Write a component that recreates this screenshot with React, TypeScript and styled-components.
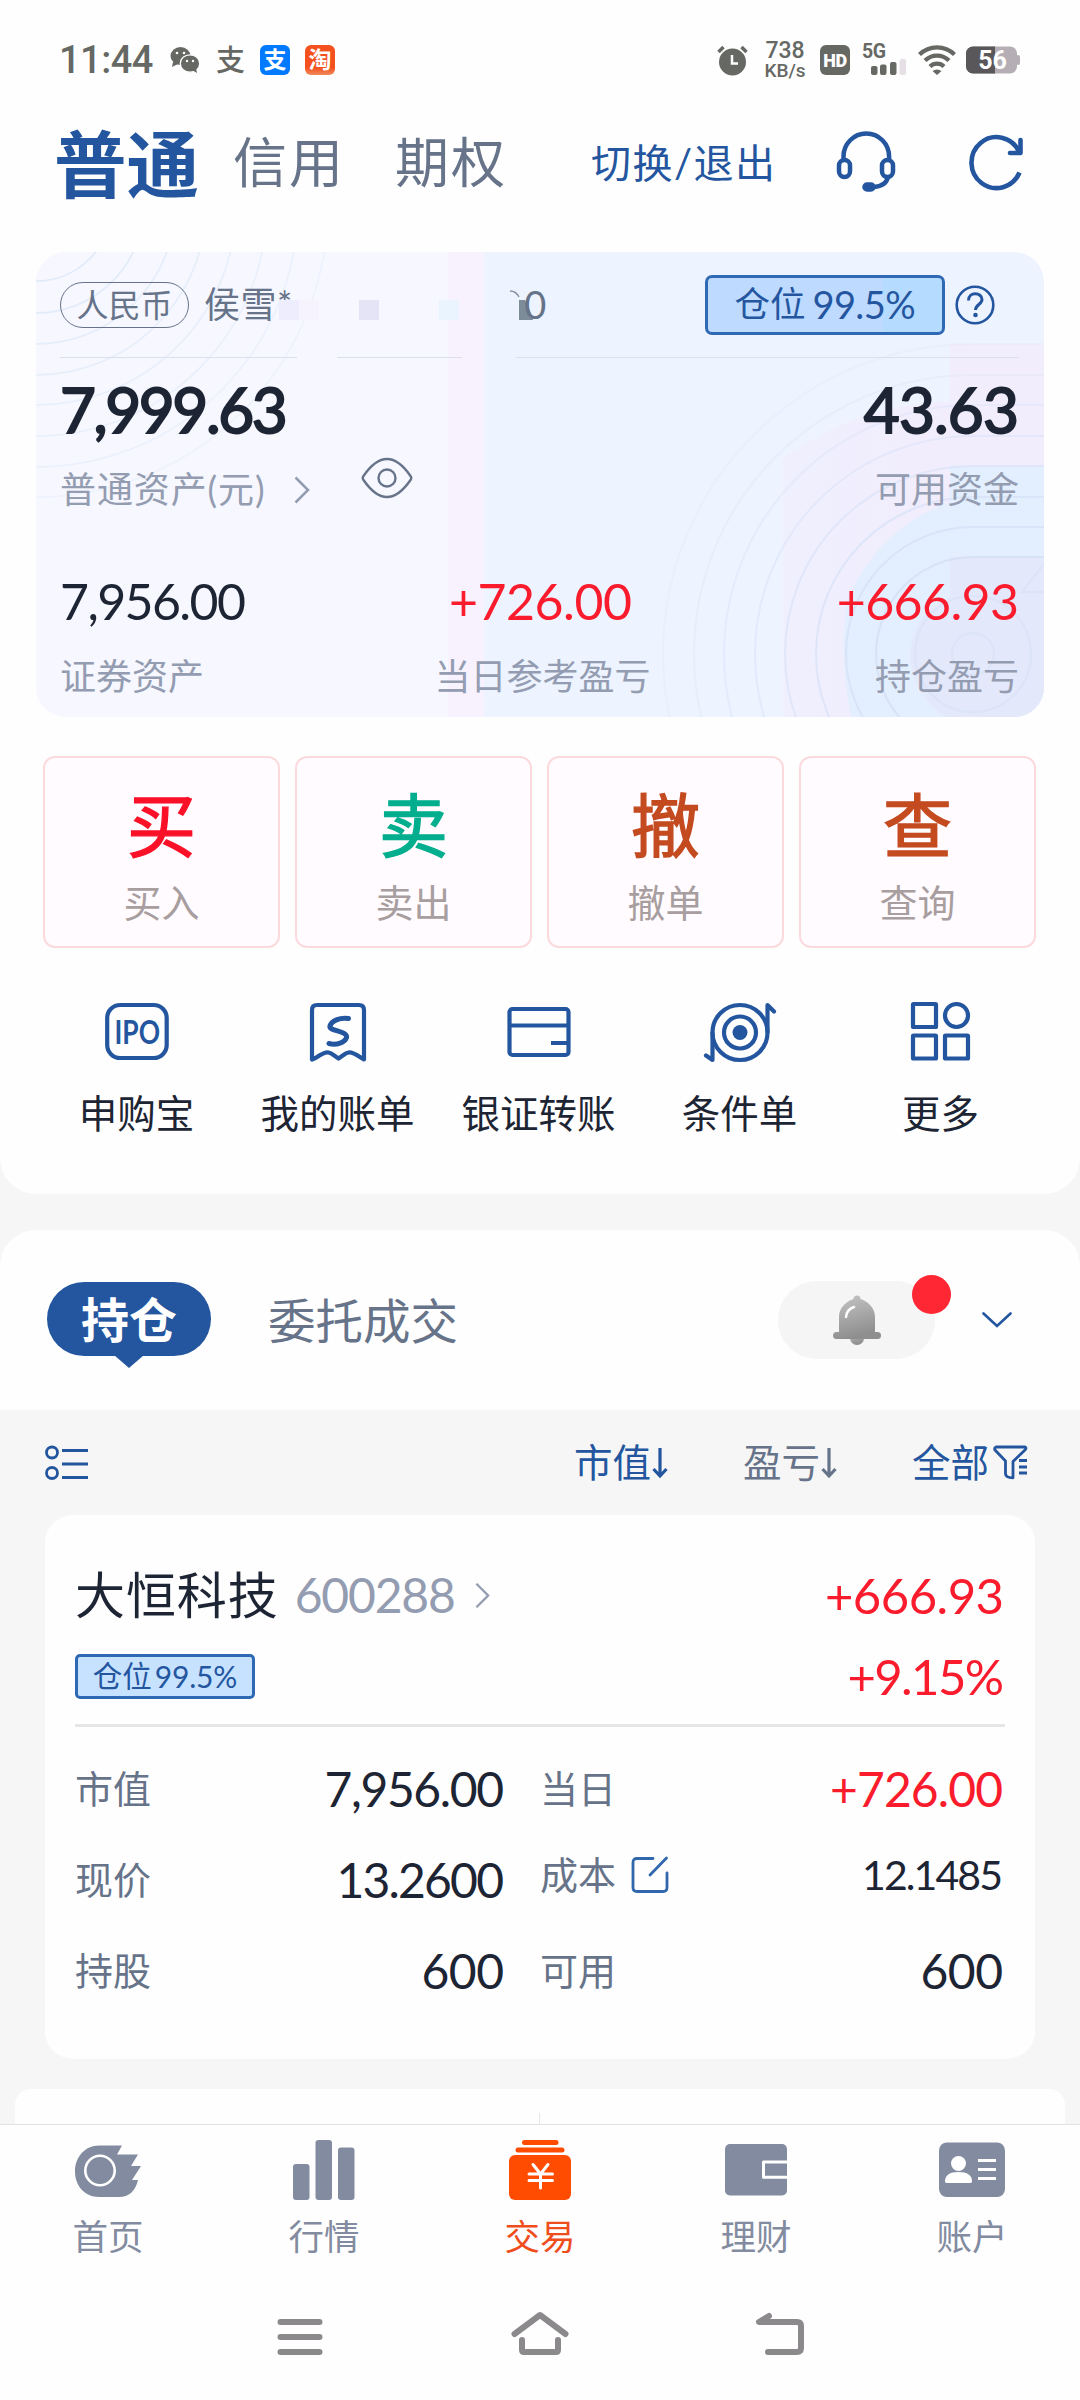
import React from 'react';
import styled, { createGlobalStyle } from 'styled-components';

const BLUE = '#24569f';
const INK = '#1d2433';
const SLATE = '#667389';
const MUTED = '#939cb0';
const RED = '#fa1b2d';
const NAV = '#828b9f';

const Global = createGlobalStyle`
  * { box-sizing: border-box; }
  html, body { margin: 0; padding: 0; background: #fefefe; }
  body { font-family: 'Lato', 'Noto Sans CJK SC', sans-serif; color: ${INK}; }
  svg { display: block; flex: none; }
`;

const Screen = styled.div`
  width: 1080px;
  height: 2400px;
  overflow: hidden;
  display: flex;
  flex-direction: column;
  background: #f6f6f6;
`;

type TextProps = {
  $size: number;
  $color?: string;
  $weight?: number;
  $spacing?: number;
  $stroke?: number;
};

const Text = styled.span<TextProps>`
  font-size: ${(p) => p.$size}px;
  line-height: 1.2;
  color: ${(p) => p.$color ?? INK};
  font-weight: ${(p) => p.$weight ?? 400};
  letter-spacing: ${(p) => p.$spacing ?? 0}px;
  margin-right: ${(p) => -(p.$spacing ?? 0)}px;
  -webkit-text-stroke: ${(p) => p.$stroke ?? 0}px currentColor;
  white-space: nowrap;
`;

/* ---------- top area ---------- */

const TopPanel = styled.section`
  height: 1194px;
  flex: none;
  background: #fefefe;
  border-radius: 0 0 36px 36px;
  display: flex;
  flex-direction: column;
`;

const StatusBar = styled.header`
  height: 120px;
  padding: 0 60px 0 59px;
  display: flex;
  align-items: center;
  justify-content: space-between;
`;

const StatusGroup = styled.div`
  display: flex;
  align-items: center;
`;

const Clock = styled.span`
  font-family: 'Roboto', sans-serif;
  font-weight: 500;
  font-size: 38px;
  letter-spacing: -0.5px;
  line-height: 40px;
  width: 95px;
  color: #666864;
`;

const PayGlyph = styled.span`
  font-size: 29px;
  line-height: 30px;
  width: 30px;
  margin: 0 14px 0 16px;
  color: #666864;
  font-weight: 500;
`;

const AppTile = styled.span<{ $bg: string }>`
  width: 30px;
  height: 30px;
  border-radius: 6px;
  background: ${(p) => p.$bg};
  color: #fff;
  font-size: 23px;
  font-weight: 700;
  line-height: 29px;
  text-align: center;
  margin-right: 15px;
`;

const Speed = styled.div`
  font-family: 'Roboto', sans-serif;
  font-weight: 500;
  color: #666864;
  width: 46px;
  margin: 0 12px 0 14px;
  display: flex;
  flex-direction: column;
  align-items: center;
  b { font-weight: 500; font-size: 23px; line-height: 20px; }
  i { font-style: normal; font-size: 19px; line-height: 19px; }
`;

const HdTile = styled.span`
  width: 30px;
  height: 30px;
  border-radius: 6px;
  background: #666864;
  color: #fefefe;
  font: 900 18px/31px 'Roboto', sans-serif;
  letter-spacing: -0.5px;
  text-align: center;
  margin-right: 12px;
`;

const TitleBar = styled.div`
  height: 84px;
  display: flex;
  align-items: center;
  padding: 2px 56px 0 54px;
`;

const TitleTabs = styled.nav`
  display: flex;
  align-items: center;
  flex: 1;
`;

const TitleTab = styled(Text)<{ $left?: number }>`
  margin-left: ${(p) => p.$left ?? 0}px;
`;

const TitleActions = styled.div`
  display: flex;
  align-items: center;
`;

/* ---------- asset card ---------- */

const AssetCard = styled.section`
  position: relative;
  margin: 48px 36px 0;
  height: 465px;
  border-radius: 30px;
  overflow: hidden;
  background: linear-gradient(90deg, #f6f7ff 0 412px, #f8f1fe 412px 448px, #edf3ff 448px);
`;

const CardArt = styled.svg`
  position: absolute;
  left: 0;
  top: 0;
`;

const CardBody = styled.div`
  position: relative;
  padding: 0 25px 0 24px;
`;

const AccountRow = styled.div`
  height: 105px;
  display: flex;
  align-items: center;
  justify-content: space-between;
  margin-right: 24px;
`;

const Inline = styled.div<{ $gap?: number; $margin?: string }>`
  display: flex;
  align-items: center;
  gap: ${(p) => p.$gap ?? 0}px;
  margin: ${(p) => p.$margin ?? '0'};
`;

const CurrencyPill = styled.span`
  width: 129px;
  height: 46px;
  border: 1.5px solid ${SLATE};
  border-radius: 23px;
  color: ${SLATE};
  font-size: 32px;
  line-height: 43px;
  text-align: center;
  margin-right: 15px;
`;

const MaskArt = styled.svg`
  margin-left: -13px;
`;

const MaskTail = styled(Text)`
  margin-left: -12px;
`;

const Badge = styled.span<{ $small?: boolean }>`
  display: flex;
  align-items: center;
  justify-content: center;
  gap: ${(p) => (p.$small ? 3 : 7)}px;
  width: ${(p) => (p.$small ? 180 : 240)}px;
  height: ${(p) => (p.$small ? 45 : 60)}px;
  border: 3px solid #3069b3;
  border-radius: ${(p) => (p.$small ? 5 : 7)}px;
  background: ${(p) => (p.$small ? '#c6e2ff' : 'linear-gradient(90deg, #bedaff 0 75%, #b5dbff 75%)')};
`;

const Rules = styled.div`
  display: flex;
  height: 1px;
`;

const Rule = styled.span<{ $w: number; $gap?: number }>`
  width: ${(p) => p.$w}px;
  margin-left: ${(p) => p.$gap ?? 0}px;
  height: 1px;
  background: #dbe0ee;
`;

const Row = styled.div<{ $h: number; $top?: number }>`
  display: flex;
  align-items: center;
  justify-content: space-between;
  height: ${(p) => p.$h}px;
  margin-top: ${(p) => p.$top ?? 0}px;
`;

const Thirds = styled.div<{ $h: number; $top?: number; $shift?: number }>`
  display: grid;
  grid-template-columns: 1fr auto 1fr;
  align-items: center;
  height: ${(p) => p.$h}px;
  margin-top: ${(p) => p.$top ?? 0}px;
  > :nth-child(2) { padding-left: ${(p) => p.$shift ?? 0}px; }
  > :last-child { justify-self: end; }
`;

/* ---------- trade buttons & shortcuts ---------- */

const TradeGrid = styled.div`
  display: grid;
  grid-template-columns: repeat(4, 1fr);
  column-gap: 15px;
  margin: 39px 44px 0 43px;
`;

const TradeButton = styled.button`
  height: 192px;
  margin: 0;
  border: 2px solid #fadadd;
  border-radius: 12px;
  background: #fffbfe;
  padding: 28px 0 0;
  display: flex;
  flex-direction: column;
  align-items: center;
  font-family: inherit;
`;

const TradeGlyph = styled.span<{ $color: string }>`
  font-size: 69px;
  line-height: 80px;
  font-weight: 400;
  -webkit-text-stroke: 1.4px currentColor;
  stroke-linejoin: round;
  color: ${(p) => p.$color};
`;

const TradeLabel = styled.span`
  margin-top: 11px;
  font-size: 38px;
  line-height: 50px;
  color: #a89e9f;
`;

const Shortcuts = styled.div`
  display: grid;
  grid-template-columns: repeat(5, 1fr);
  padding: 0 39px 0 36px;
  margin-top: 52px;
`;

const Shortcut = styled.div`
  display: flex;
  flex-direction: column;
  align-items: center;
`;

const ShortcutLabel = styled.span`
  margin-top: 24px;
  font-size: 38.5px;
  line-height: 50px;
  white-space: nowrap;
`;

/* ---------- positions ---------- */

const TabsPanel = styled.section`
  height: 180px;
  flex: none;
  margin-top: 36px;
  padding: 0 68px 0 47px;
  background: #fefefe;
  border-radius: 36px 36px 0 0;
  display: flex;
  align-items: center;
  justify-content: space-between;
`;

const ActiveTab = styled.div`
  position: relative;
  width: 164px;
  height: 74px;
  border-radius: 37px;
  background: ${BLUE};
  color: #fff;
  font-size: 48px;
  line-height: 76px;
  font-weight: 700;
  text-align: center;
  margin: 0 57px 2px 0;
  &::after {
    content: '';
    position: absolute;
    left: 67px;
    top: 73px;
    border: 15px solid transparent;
    border-top: 13px solid ${BLUE};
    border-bottom: 0;
  }
`;

const BellButton = styled.div`
  position: relative;
  width: 157px;
  height: 78px;
  border-radius: 39px;
  background: #f5f5f6;
  display: flex;
  justify-content: center;
  align-items: center;
  margin-right: 47px;
`;

const RedDot = styled.span`
  position: absolute;
  width: 39px;
  height: 39px;
  border-radius: 50%;
  background: #ff2733;
  right: -16px;
  top: -6px;
`;

const FilterBar = styled.div`
  height: 105px;
  flex: none;
  padding: 0 52px 0 44px;
  display: flex;
  align-items: center;
  justify-content: space-between;
`;

const HoldingCard = styled.section`
  margin: 0 45px;
  height: 544px;
  flex: none;
  border-radius: 28px;
  background: #fefefe;
  padding: 30px 31px 0 30px;
`;

const HoldingRule = styled.div`
  height: 3px;
  margin: 17px -1px 16px 0;
  background: #e6e6e6;
`;

const Figures = styled.div`
  display: grid;
  grid-template-columns: 429px 463px;
  column-gap: 36px;
  margin-right: -1px;
`;

const Figure = styled.div<{ $up?: number }>`
  height: 91px;
  display: flex;
  align-items: center;
  justify-content: space-between;
  padding-bottom: ${(p) => p.$up ?? 0}px;
`;

const NextCard = styled.section`
  height: 35px;
  flex: none;
  margin: 30px 15px 0;
  border-radius: 16px 16px 0 0;
  background: #fefefe;
  padding-top: 24px;
  display: flex;
  justify-content: center;
`;

const NextRule = styled.span`
  width: 1px;
  background: #e6e6e6;
  margin-right: 1px;
`;

/* ---------- bottom bars ---------- */

const TabBar = styled.nav`
  height: 156px;
  flex: none;
  border-top: 1px solid #e2e2e2;
  background: #fefefe;
  display: grid;
  grid-template-columns: repeat(5, 1fr);
`;

const TabItem = styled.div<{ $active?: boolean }>`
  display: flex;
  flex-direction: column;
  align-items: center;
  padding-top: 15px;
  color: ${(p) => (p.$active ? '#f04d1c' : NAV)};
  font-size: 35.5px;
  line-height: 44px;
  svg { margin-bottom: 15px; }
`;

const SystemBar = styled.footer`
  flex: 1;
  background: #fefefe;
  display: flex;
  justify-content: center;
  gap: 180px;
  padding-top: 25px;
`;

/* ---------- icons ---------- */

const WeChat = () => (
  <svg width="30" height="28" viewBox="0 0 30 28">
    <ellipse cx="10.500" cy="10" rx="10" ry="9" fill="#666864" />
    <path d="M3 16l-1 5 6-3z" fill="#666864" />
    <ellipse cx="20" cy="17.500" rx="9.700" ry="8.700" fill="#666864" stroke="#fefefe" strokeWidth="1.300" />
    <path d="M22 24l5 3-1-5z" fill="#666864" />
    <g fill="#fefefe">
      <circle cx="7" cy="7" r="1.300" /><circle cx="14" cy="7" r="1.300" />
      <circle cx="17" cy="15" r="1.200" /><circle cx="23" cy="15" r="1.200" />
    </g>
  </svg>
);

const Alarm = () => (
  <svg width="31" height="31" viewBox="0 0 31 31" fill="none">
    <circle cx="15.500" cy="17" r="13.500" fill="#666864" />
    <path d="M1.500 7l5-5M29.500 7l-5-5" stroke="#666864" strokeWidth="3.500" />
    <path d="M15 10v8.500h6" stroke="#fefefe" strokeWidth="2.500" />
  </svg>
);

const SignalBox = styled.div`
  position: relative;
  width: 46px;
  height: 32px;
`;

const FiveG = styled.span`
  position: absolute;
  left: 0;
  top: -4px;
  font: 700 19.5px/24px 'Roboto', sans-serif;
  letter-spacing: -0.5px;
  color: #666864;
`;

const Signal = () => (
  <SignalBox>
    <svg width="46" height="32" viewBox="0 0 46 32">
      <rect x="9" y="22" width="6.500" height="9" rx="2" fill="#666864" />
      <rect x="18" y="20.500" width="6.500" height="10.500" rx="2" fill="#666864" />
      <rect x="28" y="18" width="6.500" height="13" rx="2" fill="#666864" />
      <rect x="37.500" y="15" width="6.500" height="16" rx="2" fill="#e6e0e6" />
    </svg>
    <FiveG>5G</FiveG>
  </SignalBox>
);

const Wifi = () => (
  <svg width="38" height="31" viewBox="0 0 38 31" fill="none" stroke="#666864" strokeWidth="4.200">
    <path d="M1.500 9.500a25 25 0 0 1 35 0" />
    <path d="M7 15.500a17 17 0 0 1 24 0" />
    <path d="M12 21.500a10 10 0 0 1 14 0" />
    <path d="M14.500 26q4.500-3 9 0L19 30z" fill="#666864" stroke="none" />
  </svg>
);

const Battery = () => (
  <svg width="54" height="28" viewBox="0 0 54 28">
    <rect x="0" y="0.500" width="51" height="27" rx="7" fill="#b5afb5" />
    <path d="M7 .5h22v27H7a7 7 0 0 1-7-7v-13a7 7 0 0 1 7-7z" fill="#595759" />
    <rect x="50" y="9" width="4" height="10" rx="2" fill="#b5afb5" />
    <text x="26.500" y="23" textAnchor="middle" fontFamily="Roboto, sans-serif" fontWeight="700" fontSize="25" fill="#fff">56</text>
  </svg>
);

const Headset = () => (
  <svg width="60" height="62" viewBox="0 0 60 62" fill="none" stroke={BLUE} strokeWidth="4.500">
    <path d="M7.500 28v-2.500a22.800 23 0 0 1 45.600 0V28" />
    <rect x="3" y="29" width="11" height="17" rx="5.500" />
    <rect x="46" y="29" width="11" height="17" rx="5.500" />
    <path d="M52 46q-2 9-14 10" />
    <rect x="28.500" y="53.500" width="9" height="5" rx="2.500" fill={BLUE} />
  </svg>
);

const Refresh = () => (
  <svg width="55" height="58" viewBox="0 0 55 58" fill="none" stroke={BLUE} strokeWidth="4.600">
    <path d="M50.500 39.500A25 25.500 0 1 1 50 18.500" />
    <path d="M51.500 7v13H41" strokeLinecap="round" strokeLinejoin="round" />
  </svg>
);

const CardLines = () => (
  <CardArt width="1008" height="465" viewBox="0 0 1008 465" fill="none">
    <defs>
      <linearGradient id="blush" x1="0" y1="0" x2="1" y2="0">
        <stop offset="0" stopColor="#f0eefe" stopOpacity=".75" />
        <stop offset=".5" stopColor="#f1edfd" />
      </linearGradient>
    </defs>
    <path d="M1008 92H914V150Q830 150 747 205V465H1008z" fill="url(#blush)" />
    <path d="M1008 214H914V250Q845 275 812 345Q802 400 815 465H1008z" fill="#e3effe" />
    <path d="M1008 305H914V345Q876 362 874 405Q878 445 910 465H1008z" fill="#e4e8fb" />
    <g stroke="#dfeaf8" strokeWidth="1.600">
      {[76, 108, 139, 170, 200, 231, 262, 292].map((r, i) => (
        <circle key={r} cx="0" cy="-47" r={r} opacity={1 - i * 0.09} />
      ))}
    </g>
    <g stroke="#d3dff5" strokeWidth="2">
      {[97, 127, 157, 188, 218, 249, 279, 310].map((r, i) => (
        <path
          key={r}
          d={`M1008 ${402 - r}H937A${r} ${r} 0 0 0 937 ${402 + r}`}
          opacity={0.8 - i * 0.09}
        />
      ))}
      <circle cx="937" cy="402" r="58" opacity=".5" />
      <circle cx="937" cy="402" r="21" opacity=".5" />
      <path d="M1008 312l-22 28h22" opacity=".6" />
    </g>
  </CardArt>
);

const Help = () => (
  <svg width="40" height="40" viewBox="0 0 40 40" fill="none" stroke={BLUE} strokeWidth="2.600">
    <circle cx="20" cy="20" r="18.300" />
    <path d="M13.500 15.500c0-9 13.500-8.500 13.500-1 0 5-6.500 5-6.500 10.500" strokeWidth="3" />
    <circle cx="20.500" cy="30" r="2.300" fill={BLUE} stroke="none" />
  </svg>
);

const Chevron = ({ color, w = 16, h = 28 }: { color: string; w?: number; h?: number }) => (
  <svg width={w} height={h} viewBox="0 0 16 28" fill="none" stroke={color} strokeWidth="2.500">
    <path d="M1.500 1.500L14 14 1.500 26.500" />
  </svg>
);

const Eye = () => (
  <svg width="52" height="42" viewBox="0 0 52 42" fill="none" stroke={SLATE} strokeWidth="2.400">
    <path d="M2.500 19C8 11 16 2 26 2s18 9 23.500 17q1.500 2 0 4C44 31 36 40 26 40S8 31 2.500 23q-1.500-2 0-4z" />
    <circle cx="26" cy="21" r="8.500" />
  </svg>
);

const IpoIcon = () => (
  <svg width="64" height="64" viewBox="0 0 64 64" fill="none">
    <rect x="2.200" y="5" width="59.500" height="53" rx="13" stroke={BLUE} strokeWidth="4.200" />
    <text x="9.500" y="43.500" textLength="45.500" lengthAdjust="spacingAndGlyphs" fontFamily="Lato, sans-serif" fontWeight="700" fontSize="31.500" fill={BLUE}>IPO</text>
  </svg>
);

const BillIcon = () => (
  <svg width="64" height="64" viewBox="0 0 64 64" fill="none" stroke={BLUE} strokeWidth="4.200">
    <path d="M6 59.500V10q0-5 5-5h42q5 0 5 5v49.500l-2.500-1.500q-9-6-13-5.500-2.500.5-5 2.500l-5 3.500-5-3.500q-2.500-2-5-2.500-4-.5-13 5.500z" strokeLinejoin="round" />
    <path d="M42.500 18.500c-9-1-17 2-18.500 7.500s18 4.500 16.500 11.500c-1.500 5-10 8-17.500 6" strokeWidth="5" strokeLinecap="round" />
  </svg>
);

const TransferIcon = () => (
  <svg width="64" height="64" viewBox="0 0 64 64" fill="none" stroke={BLUE} strokeWidth="4.200">
    <rect x="2.500" y="9" width="59" height="46" rx="3" />
    <path d="M2 25.500h60M44 43h18" />
  </svg>
);

const TargetIcon = () => (
  <svg width="74" height="64" viewBox="0 0 74 64" fill="none" stroke={BLUE} strokeWidth="4.200">
    <circle cx="37" cy="32.500" r="27.500" />
    <circle cx="37" cy="32.500" r="16" />
    <circle cx="37" cy="32.500" r="7.500" fill={BLUE} stroke="none" />
    <path d="M9.500 33v27L3 55.500M64.500 32V5l6.500 6.500" strokeLinecap="round" strokeLinejoin="round" />
  </svg>
);

const MoreIcon = () => (
  <svg width="62" height="64" viewBox="0 0 62 64" fill="none" stroke={BLUE} strokeWidth="4.200">
    <rect x="3" y="4" width="23" height="23" rx="0.500" />
    <circle cx="46.500" cy="15.500" r="11.500" />
    <rect x="3" y="35.500" width="23" height="23" rx="0.500" />
    <rect x="35" y="35.500" width="23" height="23" rx="0.500" />
  </svg>
);

const Bell = () => (
  <svg width="48" height="52" viewBox="0 0 48 52">
    <defs>
      <linearGradient id="bell" x1="0" y1="0" x2="0.300" y2="1">
        <stop offset="0" stopColor="#c6c6c6" />
        <stop offset="1" stopColor="#8e8e8e" />
      </linearGradient>
    </defs>
    <g fill="url(#bell)">
      <circle cx="24" cy="44" r="7" />
      <path d="M20.500 5a3.500 3.500 0 0 1 7 0c9 3 14.500 10 14.500 18v15h2.500a3.500 3.500 0 0 1 0 7h-41a3.500 3.500 0 0 1 0-7H6V23C6 15 11.500 8 20.500 5z" />
    </g>
    <path d="M13 23q1-8 8-10" stroke="#fff" strokeWidth="2.500" strokeLinecap="round" fill="none" />
  </svg>
);

const DownChevron = () => (
  <svg width="30" height="16" viewBox="0 0 30 16" fill="none" stroke={BLUE} strokeWidth="2.600" strokeLinecap="round">
    <path d="M1.500 1.500L15 14 28.500 1.500" />
  </svg>
);

const ListIcon = () => (
  <svg width="45" height="36" viewBox="0 0 45 36" fill="none" stroke={BLUE} strokeWidth="2.800">
    <circle cx="8" cy="7.500" r="5.500" />
    <circle cx="8" cy="28" r="5.500" />
    <path d="M18 5.500h26M18 19h26M18 32.500h26" />
  </svg>
);

const SortArrow = ({ color }: { color: string }) => (
  <svg width="16" height="32" viewBox="0 0 16 32" fill="none" stroke={color} strokeWidth="3.200">
    <path d="M8 1v28M1.500 22l6.500 7 6.500-7" />
  </svg>
);

const Funnel = () => (
  <svg width="35" height="35" viewBox="0 0 35 35" fill="none" stroke={BLUE} strokeWidth="2.800" strokeLinejoin="round">
    <path d="M3 2h29q2 1 0 3L20 16.500v16.300q-8 0-7.500-5V16L2 5q-1-2 1-3z" />
    <path d="M26 15.500h8M26 22h8M26 28h8" />
  </svg>
);

const EditIcon = () => (
  <svg width="38" height="38" viewBox="0 0 38 38" fill="none" stroke="#3167ad" strokeWidth="2.800" strokeLinecap="round">
    <path d="M22 2.500H6q-4 0-4 4v25q0 4 4 4h26q4 0 4-4V17" />
    <path d="M19 19L35.500 2" />
  </svg>
);

const HomeTab = () => (
  <svg width="66" height="60" viewBox="0 0 66 60">
    <path d="M47 5.500l-5 9h21L56 26h10L57 40h6q-4 17-19 17H24C10 57 0 46 0 31.500S10 5.500 24 5.500z" fill={NAV} />
    <circle cx="25" cy="30.500" r="14.700" fill="none" stroke="#fff" strokeWidth="2.600" />
  </svg>
);

const QuoteTab = () => (
  <svg width="62" height="60" viewBox="0 0 62 60" fill={NAV}>
    <rect x="0" y="24" width="16.500" height="36" rx="3" />
    <rect x="22.500" y="0" width="16.500" height="60" rx="3" />
    <rect x="45" y="7.500" width="16.500" height="52.500" rx="3" />
  </svg>
);

const TradeTab = () => (
  <svg width="62" height="60" viewBox="0 0 62 60" fill="#ff4c00">
    <rect x="13" y="0" width="36.500" height="5" rx="2.500" />
    <rect x="6.500" y="7.500" width="49" height="5" rx="2.500" />
    <rect x="0" y="15" width="62" height="45" rx="6" />
    <path d="M24 24.500l7.500 9.500 7.500-9.500M31.500 34v14M20 34h23.500M20 40.500h23.500" fill="none" stroke="#fff" strokeWidth="3" strokeLinecap="round" />
  </svg>
);

const WalletTab = () => (
  <svg width="62" height="60" viewBox="0 0 62 60">
    <rect x="0" y="4" width="62" height="51.500" rx="5" fill={NAV} />
    <path d="M62 22H38.500V37.200H62" fill="none" stroke="#fff" strokeWidth="3" strokeLinejoin="round" />
  </svg>
);

const AccountTab = () => (
  <svg width="66" height="60" viewBox="0 0 66 60">
    <rect x="0" y="2.500" width="66" height="54.500" rx="8" fill={NAV} />
    <circle cx="19.500" cy="23.500" r="7.500" fill="#fff" />
    <path d="M6 41.500q0-9.500 13.500-9.500T33 41.500q0 1.500-2 1.500H8Q6 43 6 41.500z" fill="#fff" />
    <path d="M39 20.500h18M39 29.500h18M39 38.500h18" stroke="#fff" strokeWidth="3" />
  </svg>
);

const SysMenu = () => (
  <svg width="60" height="60" viewBox="0 0 60 60" stroke="#8c898c" strokeWidth="6" strokeLinecap="round">
    <path d="M10.500 17h39M10.500 32h39M10.500 47h39" />
  </svg>
);

const SysHome = () => (
  <svg width="60" height="60" viewBox="0 0 60 60" fill="none" stroke="#8c898c" strokeWidth="6" strokeLinecap="round" strokeLinejoin="round">
    <path d="M4.500 29L30 10l25.500 19" />
    <path d="M12 35v10q0 2 2 2h32q2 0 2-2V35" />
  </svg>
);

const SysBack = () => (
  <svg width="60" height="60" viewBox="0 0 60 60" fill="none" stroke="#8c898c" strokeWidth="6" strokeLinecap="round" strokeLinejoin="round">
    <path d="M19 11L9 17h38q4 0 4 4v22q0 4-4 4H18" />
  </svg>
);

/* ---------- data ---------- */

const trades = [
  { glyph: '买', label: '买入', color: '#fa1128' },
  { glyph: '卖', label: '卖出', color: '#02ae8e' },
  { glyph: '撤', label: '撤单', color: '#c44a20' },
  { glyph: '查', label: '查询', color: '#c44a20' },
];

const shortcuts = [
  { label: '申购宝', icon: <IpoIcon /> },
  { label: '我的账单', icon: <BillIcon /> },
  { label: '银证转账', icon: <TransferIcon /> },
  { label: '条件单', icon: <TargetIcon /> },
  { label: '更多', icon: <MoreIcon /> },
];

const tabs = [
  { label: '首页', icon: <HomeTab /> },
  { label: '行情', icon: <QuoteTab /> },
  { label: '交易', icon: <TradeTab />, active: true },
  { label: '理财', icon: <WalletTab /> },
  { label: '账户', icon: <AccountTab /> },
];

export default function App() {
  return (
    <Screen>
      <Global />
      <TopPanel>
        <StatusBar>
          <StatusGroup>
            <Clock>11:44</Clock>
            <Inline $margin="0 0 0 16px"><WeChat /></Inline>
            <PayGlyph>支</PayGlyph>
            <AppTile $bg="#027aff">支</AppTile>
            <AppTile $bg="linear-gradient(#f4511e 0 75%, #f08a5a)">淘</AppTile>
          </StatusGroup>
          <StatusGroup>
            <Alarm />
            <Speed><b>738</b><i>KB/s</i></Speed>
            <HdTile>HD</HdTile>
            <Signal />
            <Inline $margin="0 10px"><Wifi /></Inline>
            <Battery />
          </StatusGroup>
        </StatusBar>

        <TitleBar>
          <TitleTabs>
            <TitleTab $size={72.5} $color={BLUE} $weight={700}>普通</TitleTab>
            <TitleTab $size={54} $color={SLATE} $spacing={2} $left={34}>信用</TitleTab>
            <TitleTab $size={54} $color={SLATE} $spacing={2} $left={52}>期权</TitleTab>
          </TitleTabs>
          <TitleActions>
            <Text $size={40} $color={BLUE} $spacing={1.5}>切换/退出</Text>
            <Inline $margin="-2px 73px 0 61px"><Headset /></Inline>
            <Inline $margin="-2px 0 0"><Refresh /></Inline>
          </TitleActions>
        </TitleBar>

        <AssetCard>
          <CardLines />
          <CardBody>
            <AccountRow>
              <Inline>
                <CurrencyPill>人民币</CurrencyPill>
                <Text $size={36} $color={SLATE} $spacing={0.5}>侯雪*</Text>
                <MaskArt width="257" height="40" viewBox="0 0 257 40">
                  <rect x="0" y="15" width="20" height="20" fill="#ededfd" />
                  <rect x="20" y="15" width="20" height="20" fill="#f7f3fe" />
                  <rect x="80" y="15" width="20" height="20" fill="#e5e4f7" />
                  <rect x="160" y="15" width="20" height="20" fill="#e9f4ff" />
                  <path d="M231 6q6 0 9 6" stroke="#8793a4" strokeWidth="1.500" fill="none" />
                  <path d="M240 15h6q4 6 8 20h-14z" fill="#7d8c99" />
                </MaskArt>
                <MaskTail $size={38} $color={SLATE}>0</MaskTail>
              </Inline>
              <Inline $gap={10}>
                <Badge>
                  <Text $size={35.5} $color={BLUE}>仓位</Text>
                  <Text $size={38} $color={BLUE} $spacing={-0.6}>99.5%</Text>
                </Badge>
                <Help />
              </Inline>
            </AccountRow>
            <Rules>
              <Rule $w={237} />
              <Rule $w={125} $gap={40} />
              <Rule $w={504} $gap={54} />
            </Rules>
            <Row $h={102}>
              <Text $size={62} $stroke={2} $spacing={-2.4}>7,999.63</Text>
              <Text $size={62} $stroke={2} $spacing={-0.8}>43.63</Text>
            </Row>
            <Row $h={60}>
              <Inline>
                <Text $size={36} $color={MUTED} $spacing={0.9}>普通资产(元)</Text>
                <Inline $margin="0 51px 0 29px"><Chevron color={MUTED} /></Inline>
                <Inline $margin="-24px 0 0"><Eye /></Inline>
              </Inline>
              <Text $size={36} $color={MUTED}>可用资金</Text>
            </Row>
            <Thirds $h={82} $top={40} $shift={2}>
              <Text $size={50} $spacing={-1.6}>7,956.00</Text>
              <Text $size={50} $color={RED} $spacing={-0.5}>+726.00</Text>
              <Text $size={50} $color={RED} $spacing={-0.6}>+666.93</Text>
            </Thirds>
            <Thirds $h={70} $shift={6}>
              <Text $size={36} $color={MUTED}>证券资产</Text>
              <Text $size={36} $color={MUTED}>当日参考盈亏</Text>
              <Text $size={36} $color={MUTED}>持仓盈亏</Text>
            </Thirds>
          </CardBody>
        </AssetCard>

        <TradeGrid>
          {trades.map((t) => (
            <TradeButton key={t.label}>
              <TradeGlyph $color={t.color}>{t.glyph}</TradeGlyph>
              <TradeLabel>{t.label}</TradeLabel>
            </TradeButton>
          ))}
        </TradeGrid>

        <Shortcuts>
          {shortcuts.map((s) => (
            <Shortcut key={s.label}>
              {s.icon}
              <ShortcutLabel>{s.label}</ShortcutLabel>
            </Shortcut>
          ))}
        </Shortcuts>
      </TopPanel>

      <TabsPanel>
        <Inline>
          <ActiveTab>持仓</ActiveTab>
          <Text $size={47.5} $color={SLATE}>委托成交</Text>
        </Inline>
        <Inline>
          <BellButton>
            <Bell />
            <RedDot />
          </BellButton>
          <DownChevron />
        </Inline>
      </TabsPanel>

      <FilterBar>
        <ListIcon />
        <Inline $gap={75}>
          <Inline $gap={1}>
            <Text $size={38.5} $color={BLUE}>市值</Text>
            <SortArrow color={BLUE} />
          </Inline>
          <Inline $gap={1}>
            <Text $size={38.5} $color={SLATE}>盈亏</Text>
            <SortArrow color={SLATE} />
          </Inline>
          <Inline $gap={4}>
            <Text $size={38.5} $color={BLUE}>全部</Text>
            <Funnel />
          </Inline>
        </Inline>
      </FilterBar>

      <HoldingCard>
        <Row $h={100}>
          <Inline>
            <Text $size={50} $spacing={0.9}>大恒科技</Text>
            <Inline $gap={19} $margin="0 0 0 17px">
              <Text $size={48} $color={MUTED} $spacing={-1.2}>600288</Text>
              <Chevron color={MUTED} w={15} h={27} />
            </Inline>
          </Inline>
          <Text $size={49} $color={RED} $spacing={-0.5}>+666.93</Text>
        </Row>
        <Row $h={62}>
          <Badge $small>
            <Text $size={29.5} $color={BLUE}>仓位</Text>
            <Text $size={30} $color={BLUE} $spacing={-0.2}>99.5%</Text>
          </Badge>
          <Text $size={49} $color={RED} $spacing={-1.6}>+9.15%</Text>
        </Row>
        <HoldingRule />
        <Figures>
          <Figure>
            <Text $size={38} $color={SLATE}>市值</Text>
            <Text $size={48} $spacing={-1.4}>7,956.00</Text>
          </Figure>
          <Figure>
            <Text $size={38} $color={SLATE}>当日</Text>
            <Text $size={48} $color={RED} $spacing={-0.9}>+726.00</Text>
          </Figure>
          <Figure>
            <Text $size={38} $color={SLATE}>现价</Text>
            <Text $size={48} $spacing={-1.8}>13.2600</Text>
          </Figure>
          <Figure $up={9}>
            <Inline $gap={15}>
              <Text $size={38} $color={SLATE}>成本</Text>
              <EditIcon />
            </Inline>
            <Text $size={41} $spacing={-1.9}>12.1485</Text>
          </Figure>
          <Figure>
            <Text $size={38} $color={SLATE}>持股</Text>
            <Text $size={48} $spacing={-0.5}>600</Text>
          </Figure>
          <Figure>
            <Text $size={38} $color={SLATE}>可用</Text>
            <Text $size={48} $spacing={-0.5}>600</Text>
          </Figure>
        </Figures>
      </HoldingCard>

      <NextCard><NextRule /></NextCard>

      <TabBar>
        {tabs.map((t) => (
          <TabItem key={t.label} $active={t.active}>
            {t.icon}
            {t.label}
          </TabItem>
        ))}
      </TabBar>
      <SystemBar>
        <SysMenu />
        <SysHome />
        <SysBack />
      </SystemBar>
    </Screen>
  );
}
